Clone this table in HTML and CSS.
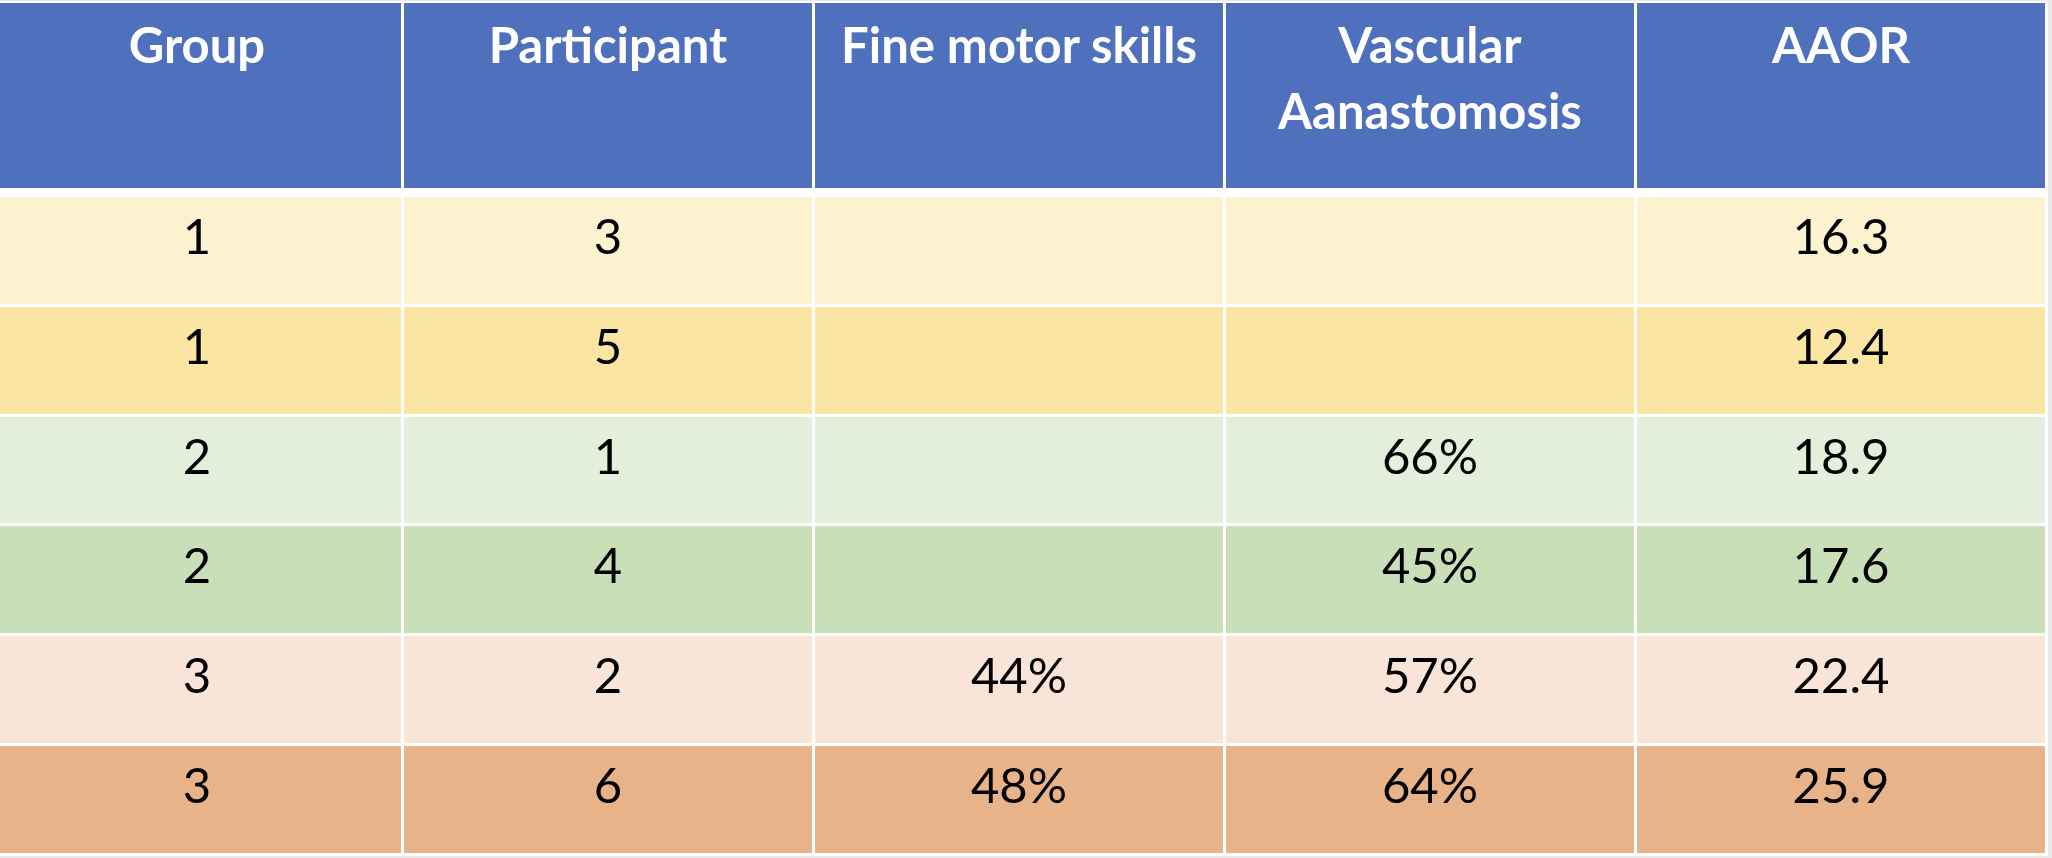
FILE: index.html
```html
<!DOCTYPE html>
<html lang="en">
<head>
<meta charset="utf-8">
<title>Participant results</title>
<link rel="stylesheet" href="styles.css">
</head>
<body>
<div class="table">
  <div class="cell head">Group</div>
  <div class="cell head">Participant</div>
  <div class="cell head">Fine motor skills</div>
  <div class="cell head">Vascular<br>Aanastomosis</div>
  <div class="cell head">AAOR</div>

  <div class="cell r1">1</div>
  <div class="cell r1">3</div>
  <div class="cell r1"></div>
  <div class="cell r1"></div>
  <div class="cell r1">16.3</div>

  <div class="cell r2">1</div>
  <div class="cell r2">5</div>
  <div class="cell r2"></div>
  <div class="cell r2"></div>
  <div class="cell r2">12.4</div>

  <div class="cell r3">2</div>
  <div class="cell r3">1</div>
  <div class="cell r3"></div>
  <div class="cell r3">66%</div>
  <div class="cell r3">18.9</div>

  <div class="cell r4">2</div>
  <div class="cell r4">4</div>
  <div class="cell r4"></div>
  <div class="cell r4">45%</div>
  <div class="cell r4">17.6</div>

  <div class="cell r5">3</div>
  <div class="cell r5">2</div>
  <div class="cell r5">44%</div>
  <div class="cell r5">57%</div>
  <div class="cell r5">22.4</div>

  <div class="cell r6">3</div>
  <div class="cell r6">6</div>
  <div class="cell r6">48%</div>
  <div class="cell r6">64%</div>
  <div class="cell r6">25.9</div>
</div>
</body>
</html>
```

FILE: styles.css
```css
html, body {
  margin: 0;
  padding: 0;
  background: #e9e9e9;
  overflow: hidden;
}

body {
  font-family: "Lato", "Liberation Sans", sans-serif;
  width: 2052px;
  height: 858px;
}

.table {
  display: grid;
  grid-template-columns: repeat(5, 408px);
  grid-template-rows: 191px repeat(6, 106.8px);
  column-gap: 3px;
  row-gap: 3px;
  width: max-content;
  background: #ffffff;
  padding: 2px 3px 3px 0;
  margin: 1px 0 0 -7px;
}

.cell {
  text-align: center;
  font-size: 49px;
  line-height: 66px;
  padding-top: 5px;
  color: #000000;
  box-sizing: border-box;
}

.head {
  background: #4f71bd;
  color: #ffffff;
  font-weight: 700;
  padding-top: 8px;
  margin-bottom: 6px;
}

.r1 { background: #fdf2d0; }
.r2 { background: #fae6a2; }
.r3 { background: #e3efda; }
.r4 { background: #c9dfb8; }
.r5 { background: #f8e5d8; }
.r6 { background: #e9b38a; }
```
